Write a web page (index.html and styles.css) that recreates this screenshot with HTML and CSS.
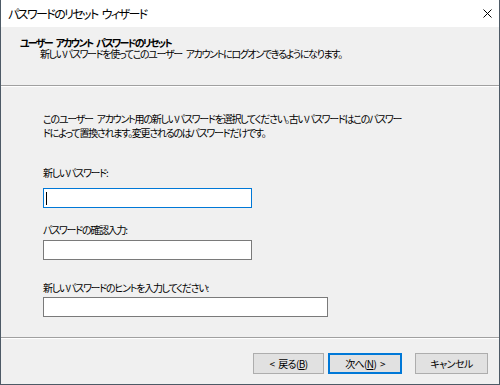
FILE: index.html
```html
<!DOCTYPE html>
<html lang="ja">
<head>
<meta charset="utf-8">
<link rel="stylesheet" href="styles.css">
</head>
<body>
<div class="window">
  <div class="titlebar">
    <span class="title">パスワードのリセット ウィザード</span>
    <svg class="close" width="9" height="9" viewBox="0 0 9 9"><path d="M0.5 0.5 L8.5 8.5 M8.5 0.5 L0.5 8.5" stroke="#000" stroke-width="1" fill="none"/></svg>
  </div>
  <div class="header">
    <div class="h-title">ユーザー アカウント パスワードのリセット</div>
    <div class="h-sub">新しいパスワードを使ってこのユーザー アカウントにログオンできるようになります。</div>
  </div>
  <div class="sep"></div>
  <div class="body">
    <p class="intro">このユーザー アカウント用の新しいパスワードを選択してください。古いパスワードはこのパスワー<br>ドによって置換されます。変更されるのはパスワードだけです。</p>
    <div class="label l1">新しいパスワード:</div>
    <div class="field f1 focus"><span class="caret"></span></div>
    <div class="label l2">パスワードの確認入力:</div>
    <div class="field f2"></div>
    <div class="label l3">新しいパスワードのヒントを入力してください:</div>
    <div class="field f3 wide"></div>
  </div>
  <div class="sep"></div>
  <div class="footer">
    <button class="btn back">&lt; 戻る(<u>B</u>)</button>
    <button class="btn next default">次へ(<u>N</u>) &gt;</button>
    <button class="btn cancel">キャンセル</button>
  </div>
</div>
</body>
</html>
```
FILE: styles.css
```css
html, body {
  margin: 0;
  padding: 0;
  background: #f0f0f0;
}
.window {
  box-sizing: border-box;
  width: 500px;
  height: 385px;
  border: 1px solid #4d5a66;
  border-top: none;
  background: #f0f0f0;
  display: flex;
  flex-direction: column;
  font-family: "Noto Sans CJK JP", sans-serif;
  font-feature-settings: "palt" 1;
  color: #000;
  font-size: 10px;
  word-spacing: 3px;
}
.titlebar {
  height: 27px;
  flex: none;
  background: #fff;
  display: flex;
  align-items: center;
  padding-left: 7px;
  padding-right: 7px;
}
.title {
  font-size: 12px;
  letter-spacing: -1.6px;
}
.close {
  margin-left: auto;
}
.header {
  height: 58px;
  flex: none;
  box-sizing: border-box;
  padding: 10px 0 0 19px;
}
.h-title {
  font-weight: bold;
  line-height: 11px;
  letter-spacing: -1.7px;
}
.h-sub {
  padding-left: 20px;
  line-height: 11px;
  letter-spacing: -1.35px;
}
.sep {
  flex: none;
  height: 1px;
  background: #a0a0a0;
  border-bottom: 1px solid #fff;
}
.body {
  flex: 1;
  padding: 25px 0 0 42px;
}
.intro {
  margin: 0;
  line-height: 14px;
  letter-spacing: -1.25px;
}
.label {
  line-height: 14px;
  letter-spacing: -1.25px;
}
.l1 { margin-top: 26px; }
.l2 { margin-top: 15px; }
.l3 { margin-top: 21px; }
.field {
  box-sizing: border-box;
  width: 209px;
  height: 20px;
  background: #fff;
  border: 1px solid #7a7a7a;
  display: flex;
  align-items: center;
  padding-left: 2px;
}
.f1 { margin-top: 8px; }
.f2 { margin-top: 3px; }
.f3 { margin-top: 2px; }
.wide { width: 285px; }
.focus { border-color: #0078d7; }
.caret {
  width: 1px;
  height: 13px;
  background: #000;
}
.footer {
  height: 45px;
  flex: none;
  box-sizing: border-box;
  padding: 14px 11px 0 0;
  display: flex;
  justify-content: flex-end;
  align-items: flex-start;
}
.btn {
  box-sizing: border-box;
  height: 21px;
  padding: 0;
  margin: 0;
  background: #e1e1e1;
  border: 1px solid #adadad;
  font-family: "Noto Sans CJK JP", sans-serif;
  font-feature-settings: "palt" 1;
  font-size: 10px;
  letter-spacing: -0.6px;
  word-spacing: 2px;
  color: #000;
  line-height: 19px;
}
.back { width: 71px; margin-right: 4px; }
.next { width: 74px; margin-right: 13px; }
.cancel { width: 73px; }
.default {
  border-color: #0078d7;
  box-shadow: inset 0 0 0 1px #0078d7;
}
```
